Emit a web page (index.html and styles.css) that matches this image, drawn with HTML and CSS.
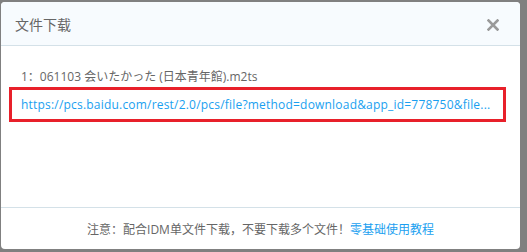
FILE: index.html
```html
<!DOCTYPE html>
<html lang="zh-CN">
<head>
    <meta charset="UTF-8">
    <title>文件下载</title>
    <link rel="stylesheet" href="styles.css">
</head>
<body>
    <div class="dialog">
        <div class="dialog-header">
            <span class="dialog-title">文件下载</span>
            <svg class="close-btn" width="12" height="12" viewBox="0 0 12 12">
                <path d="M1.5 1.5 L10.5 10.5 M10.5 1.5 L1.5 10.5" stroke="#9a9a9a" stroke-width="2.6" stroke-linecap="square"/>
            </svg>
        </div>
        <div class="dialog-body">
            <div class="file-name">1：061103 会いたかった (日本青年館).m2ts</div>
            <div class="link-box">
                <a class="file-link" href="#">https://pcs.baidu.com/rest/2.0/pcs/file?method=download&amp;app_id=778750&amp;file...</a>
            </div>
        </div>
        <div class="dialog-footer">
            注意：配合IDM单文件下载，不要下载多个文件！<a class="tutorial" href="#">零基础使用教程</a>
        </div>
    </div>
</body>
</html>
```

FILE: styles.css
```css
body {
    margin: 0;
    padding: 2px 0 0 1px;
    background-color: #808080;
    font-family: "Open Sans", "Noto Sans CJK SC", sans-serif;
    height: 252px;
    box-sizing: border-box;
    overflow: hidden;
}
.dialog {
    width: 519px;
    height: 247px;
    background-color: #fff;
    border-radius: 4px;
    display: flex;
    flex-direction: column;
    overflow: hidden;
}
.dialog-header {
    height: 43px;
    background-color: #f7fbfe;
    border-bottom: 1px solid #d4e1e8;
    display: flex;
    align-items: center;
    justify-content: space-between;
    padding: 0 21px 0 14px;
}
.dialog-title {
    font-size: 14px;
    color: #666;
}
.close-btn {
    display: block;
    margin-top: 2px;
}
.dialog-body {
    flex: 1;
    padding: 22px 14px 0 8px;
}
.file-name {
    font-size: 12px;
    color: #666;
    padding-left: 12px;
    line-height: 18px;
    margin-bottom: 1px;
}
.link-box {
    border: 3px solid #e8202a;
    height: 29px;
    padding: 0 9px;
    display: flex;
    align-items: center;
}
.file-link {
    font-size: 12px;
    letter-spacing: 0.2px;
    color: #1a9ff0;
    text-decoration: none;
    white-space: nowrap;
}
.dialog-footer {
    height: 41px;
    border-top: 1px solid #d4e1e8;
    display: flex;
    align-items: center;
    justify-content: center;
    font-size: 12px;
    color: #666;
}
.tutorial {
    color: #1a9ff0;
    text-decoration: none;
}
```
